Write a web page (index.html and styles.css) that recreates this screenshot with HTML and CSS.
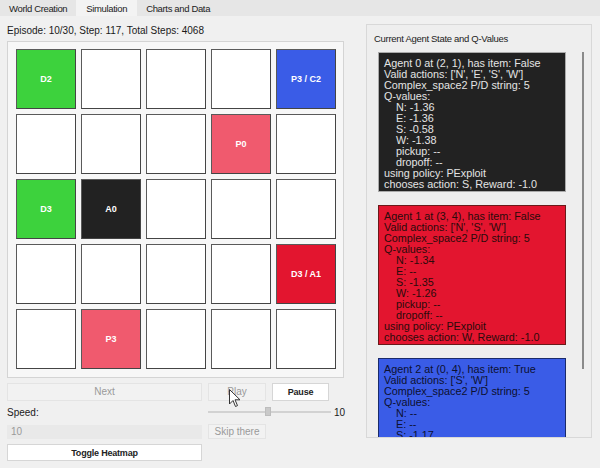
FILE: index.html
```html
<!DOCTYPE html>
<html>
<head>
<meta charset="utf-8">
<link rel="stylesheet" href="styles.css">
</head>
<body>
<div class="app">
  <div class="tabbar">
    <div class="tab">World Creation</div>
    <div class="tab active">Simulation</div>
    <div class="tab">Charts and Data</div>
  </div>
  <div class="main">
    <div class="left">
      <div class="episode">Episode: 10/30, Step: 117, Total Steps: 4068</div>
      <div class="frame">
        <div class="grid">
          <div class="cell green">D2</div><div class="cell"></div><div class="cell"></div><div class="cell"></div><div class="cell blue">P3 / C2</div>
          <div class="cell"></div><div class="cell"></div><div class="cell"></div><div class="cell pink">P0</div><div class="cell"></div>
          <div class="cell green">D3</div><div class="cell black">A0</div><div class="cell"></div><div class="cell"></div><div class="cell"></div>
          <div class="cell"></div><div class="cell"></div><div class="cell"></div><div class="cell"></div><div class="cell red">D3 / A1</div>
          <div class="cell"></div><div class="cell pink">P3</div><div class="cell"></div><div class="cell"></div><div class="cell"></div>
        </div>
      </div>
      <div class="controls">
        <div class="btn disabled">Next</div>
        <div class="btn disabled">Play</div>
        <div class="btn strong">Pause</div>
        <div class="spacer"></div>
        <div class="label">Speed:</div>
        <div class="slider"><div class="track"></div><div class="handle"></div></div>
        <div class="value">10</div>
        <div class="input">10</div>
        <div class="btn disabled small">Skip there</div>
        <div class="spacer"></div>
        <div class="spacer"></div>
        <div class="btn toggle">Toggle Heatmap</div>
      </div>
    </div>
    <div class="panel">
      <div class="panel-title">Current Agent State and Q-Values</div>
      <div class="panel-body">
        <div class="agents">
          <div class="agent a-black">Agent 0 at (2, 1), has item: False
Valid actions: ['N', 'E', 'S', 'W']
Complex_space2 P/D string: 5
Q-values:
    N: -1.36
    E: -1.36
    S: -0.58
    W: -1.38
    pickup: --
    dropoff: --
using policy: PExploit
chooses action: S, Reward: -1.0</div>
          <div class="agent a-red">Agent 1 at (3, 4), has item: False
Valid actions: ['N', 'S', 'W']
Complex_space2 P/D string: 5
Q-values:
    N: -1.34
    E: --
    S: -1.35
    W: -1.26
    pickup: --
    dropoff: --
using policy: PExploit
chooses action: W, Reward: -1.0</div>
          <div class="agent a-blue">Agent 2 at (0, 4), has item: True
Valid actions: ['S', 'W']
Complex_space2 P/D string: 5
Q-values:
    N: --
    E: --
    S: -1.17
    W: -1.17
    pickup: --
    dropoff: --
using policy: PExploit
chooses action: S, Reward: -1.0</div>
        </div>
        <div class="scrollbar"><div class="thumb"></div></div>
      </div>
    </div>
  </div>
  <svg class="cursor" width="12" height="19" viewBox="0 0 12 19"><path d="M0.5 0.5 L0.5 15 L4 11.5 L6.5 17.5 L8.5 16.6 L6 10.8 L11 10.8 Z" fill="#fff" stroke="#333" stroke-width="1"/></svg>
</div>
</body>
</html>
```
FILE: styles.css
```css
* { box-sizing: border-box; }
html, body { margin: 0; padding: 0; }
body {
  width: 600px;
  height: 468px;
  overflow: hidden;
  background: #f0f0f0;
  font-family: "Liberation Sans", Arial, sans-serif;
  font-size: 10px;
  color: #1a1a1a;
}
.app { position: relative; width: 600px; height: 468px; }
.tabbar {
  display: flex;
  height: 16px;
  background: #e6e6e6;
  align-items: stretch;
}
.tab {
  padding: 0 9px;
  line-height: 17px;
  color: #222;
  font-size: 9.5px;
  letter-spacing: -0.35px;
}
.tab.active { background: #f3f3f3; padding: 0 10px; }
.main {
  display: flex;
  padding: 0 9px 0 7px;
  gap: 22px;
}
.left { width: 337px; }
.episode {
  height: 25px;
  line-height: 14px;
  padding-top: 8px;
}
.frame {
  width: 337px;
  height: 337px;
  border: 1px solid #d4d4d4;
  background: #f7f7f7;
  padding: 7px 7px 8px 8px;
}
.grid {
  display: grid;
  grid-template-columns: repeat(5, 60px);
  grid-auto-rows: 60px;
  gap: 5px;
}
.cell {
  background: #fff;
  border: 1px solid #5a5a5a;
  border-right-color: #444;
  border-bottom-color: #444;
  display: flex;
  align-items: center;
  justify-content: center;
  color: #fff;
  font-weight: bold;
  font-size: 9px;
}
.cell.green { background: #3dd23d; }
.cell.blue { background: #3a5ce7; }
.cell.pink { background: #f05a6e; }
.cell.black { background: #222; }
.cell.red { background: #e3152f; }

.controls {
  display: grid;
  grid-template-columns: 195px 58px 57px auto;
  column-gap: 6px;
  margin-top: 5px;
  grid-template-rows: 18px 14px 17px 17px;
  row-gap: 4px;
  align-items: center;
}
.btn {
  height: 18px;
  line-height: 16px;
  text-align: center;
  border: 1px solid #e4e4e4;
  background: #f2f2f2;
  color: #222;
}
.btn.disabled { color: #9a9a9a; }
.btn.small { height: 15px; line-height: 13px; }
.btn.strong { background: #fff; border-color: #d6d6d6; font-weight: bold; font-size: 9px; letter-spacing: -0.2px; }
.btn.toggle { background: #fff; border-color: #d6d6d6; font-weight: bold; font-size: 9px; letter-spacing: -0.2px; height: 17px; }
.slider {
  grid-column: 2 / 4;
  position: relative;
  height: 10px;
  margin-right: -2px;
}
.track {
  position: absolute;
  left: 0; right: 0; top: 4px;
  height: 2px;
  background: #d2d2d2;
}
.handle {
  position: absolute;
  left: 57px; top: 0;
  width: 6px; height: 9px;
  background: #c9c9c9;
  border: 1px solid #bdbdbd;
}
.value { margin-left: -1px; }
.input {
  height: 14px;
  line-height: 14px;
  background: #e9e9e9;
  color: #9a9a9a;
  padding-left: 4px;
}

.panel {
  margin-top: 8px;
  width: 226px;
  height: 414px;
  border: 1px solid #d8d8d8;
  background: #eeeeee;
  display: flex;
  flex-direction: column;
}
.panel-title {
  height: 27px;
  padding: 8px 0 0 7px;
  line-height: 12px;
  color: #222;
  font-size: 9.5px;
  letter-spacing: -0.3px;
}
.panel-body {
  flex: 1;
  display: flex;
  overflow: hidden;
  padding-left: 11px;
}
.agents {
  width: 189px;
  display: flex;
  flex-direction: column;
  gap: 13px;
}
.agent {
  flex: none;
  white-space: pre;
  font-size: 10.8px;
  line-height: 11px;
  padding: 5px 4px 1px 5px;
  border: 1px solid #555;
}
.a-black { background: #222; color: #e4e4e4; border-color: #aaa; }
.a-red { background: #e3152f; color: #2a0b0b; border-color: #6a1a1a; }
.a-blue { background: #3a5ce7; color: #0c1030; border-color: #1a2a6a; }
.scrollbar {
  width: 25px;
  position: relative;
}
.thumb {
  position: absolute;
  left: 16px;
  top: -13px;
  width: 2px;
  height: 330px;
  background: #8a8a8a;
}
.cursor {
  position: absolute;
  left: 229px;
  top: 389px;
}
```
